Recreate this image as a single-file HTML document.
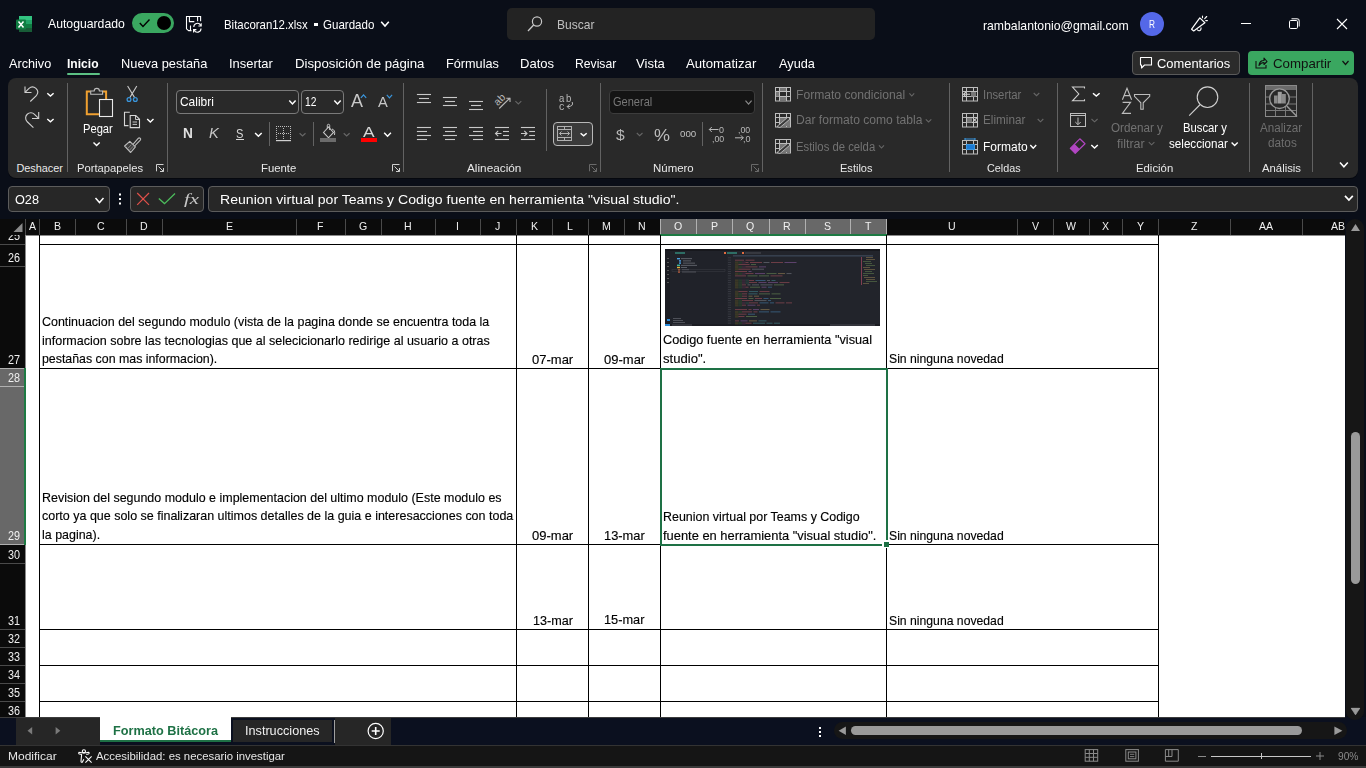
<!DOCTYPE html>
<html><head><meta charset="utf-8"><title>Excel</title>
<style>
html,body{margin:0;padding:0;width:1366px;height:768px;overflow:hidden;background:#0a0e18;}
body>div,body>svg{position:absolute;}
.t{position:absolute;white-space:pre;line-height:normal;transform-origin:0 0;font-family:"Liberation Sans",sans-serif;}
svg{overflow:visible}
</style></head><body>
<svg style="left:16px;top:16px;" width="16" height="16" viewBox="16 16 16 16">
<rect x="19" y="16" width="13" height="16" rx="1" fill="#21a366"/>
<rect x="19" y="16" width="13" height="4" fill="#33c481"/>
<rect x="19" y="24" width="13" height="4" fill="#107c41"/>
<rect x="19" y="28" width="13" height="4" fill="#185c37"/>
<rect x="16" y="19.5" width="10" height="10" rx="1" fill="#107c41"/>
<path d="M18.5 21.5 L23.5 27.5 M23.5 21.5 L18.5 27.5" stroke="#fff" stroke-width="1.5"/>
</svg>
<div class="t" style="left:48.2px;top:16.33px;font-size:13px;color:#ffffff;font-weight:400;font-family:'Liberation Sans',sans-serif;transform:scaleX(0.9402);">Autoguardado</div>
<div style="left:132px;top:13px;width:42px;height:20px;background:#3aa760;border-radius:10px;"></div>
<svg style="left:132px;top:13px;" width="42" height="20" viewBox="132 13 42 20">
<polyline points="139.8,23 143,26.5 149.5,19.5" fill="none" stroke="#000" stroke-width="1.4"/>
<circle cx="164" cy="23" r="7" fill="#000"/>
</svg>
<svg style="left:185px;top:15px;" width="19" height="18" viewBox="185 15 19 18">
<path d="M191.5 30.6 H188.6 L186.5 28.8 V16.5 H200.6 V21.3" fill="none" stroke="#fff" stroke-width="1.1"/>
<path d="M189.4 16.5 V21.6 H194.3 M197.6 16.5 V21.3" fill="none" stroke="#fff" stroke-width="1.1"/>
<path d="M190.5 25.5 V30.5" fill="none" stroke="#fff" stroke-width="1.1"/>
<path d="M193.8 27 A3.6 3.6 0 0 1 200.6 25.3 M201.2 23.2 V26 H198.4" fill="none" stroke="#fff" stroke-width="1.1"/>
<path d="M201 28.6 A3.6 3.6 0 0 1 194.2 30.3 M193.6 32.4 V29.6 H196.4" fill="none" stroke="#fff" stroke-width="1.1"/>
</svg>
<div class="t" style="left:223.7px;top:17.23px;font-size:13px;color:#ffffff;font-weight:400;font-family:'Liberation Sans',sans-serif;transform:scaleX(0.8785);">Bitacoran12.xlsx</div>
<div style="left:314px;top:22.5px;width:3.5px;height:3.5px;background:#fff;"></div>
<div class="t" style="left:323.4px;top:17.23px;font-size:13px;color:#ffffff;font-weight:400;font-family:'Liberation Sans',sans-serif;transform:scaleX(0.8888);">Guardado</div>
<svg style="left:380px;top:19px;" width="10" height="10" viewBox="380 19 10 10"><polyline points="381.2,21.8 385.0,26 388.8,21.8" fill="none" stroke="#fff" stroke-width="1.6"/></svg>
<div style="left:507px;top:8px;width:368px;height:32px;background:#232323;border-radius:5px;"></div>
<svg style="left:527px;top:15px;" width="17" height="17" viewBox="527 15 17 17"><circle cx="537" cy="21.5" r="4.6" fill="none" stroke="#c8c8c8" stroke-width="1.2"/><line x1="533.6" y1="25" x2="528" y2="31" stroke="#c8c8c8" stroke-width="1.3"/></svg>
<div class="t" style="left:556.6px;top:17.43px;font-size:13px;color:#c0c0c0;font-weight:400;font-family:'Liberation Sans',sans-serif;transform:scaleX(0.9242);">Buscar</div>
<div class="t" style="left:983.2px;top:17.53px;font-size:13px;color:#ffffff;font-weight:400;font-family:'Liberation Sans',sans-serif;transform:scaleX(0.9404);">rambalantonio@gmail.com</div>
<svg style="left:1140px;top:12px;" width="24" height="24" viewBox="1140 12 24 24"><circle cx="1152" cy="24" r="12" fill="#5468e8"/></svg>
<div class="t" style="left:1149.2px;top:18.29px;font-size:10.5px;color:#fff;font-weight:400;font-family:'Liberation Sans',sans-serif;transform:scaleX(0.7901);">R</div>
<svg style="left:1188px;top:14px;" width="22" height="20" viewBox="1188 14 22 20">
<path d="M1191.6 29.2 L1199.8 17.9 L1204.9 22.8 L1193.7 31 Z" fill="none" stroke="#fff" stroke-width="1.2" stroke-linejoin="round"/>
<path d="M1197.2 29.6 A1.9 1.9 0 0 0 1200.8 27.6" fill="none" stroke="#fff" stroke-width="1.1"/>
<path d="M1202.5 16 V17.7 M1204.7 18.6 L1206.7 16.5 M1205.7 20.6 H1207.4" stroke="#fff" stroke-width="1.1" stroke-linecap="round"/>
</svg>
<div style="left:1241px;top:23px;width:10px;height:1px;background:#fff;"></div>
<svg style="left:1288px;top:18px;" width="13" height="13" viewBox="1288 18 13 13"><rect x="1289.5" y="20.5" width="8" height="8" rx="1.2" fill="none" stroke="#fff" stroke-width="1"/><path d="M1291.5 18.8 H1297 A2 2 0 0 1 1299.2 21 V26.5" fill="none" stroke="#fff" stroke-width="1"/></svg>
<svg style="left:1336px;top:18px;" width="13" height="13" viewBox="1336 18 13 13"><path d="M1337 19 L1347 29 M1347 19 L1337 29" stroke="#fff" stroke-width="1.1"/></svg>
<div class="t" style="left:9.2px;top:56.13px;font-size:13px;color:#ffffff;font-weight:400;font-family:'Liberation Sans',sans-serif;transform:scaleX(0.9733);">Archivo</div>
<div class="t" style="left:120.5px;top:56.13px;font-size:13px;color:#ffffff;font-weight:400;font-family:'Liberation Sans',sans-serif;transform:scaleX(0.9868);">Nueva pestaña</div>
<div class="t" style="left:229.2px;top:56.13px;font-size:13px;color:#ffffff;font-weight:400;font-family:'Liberation Sans',sans-serif;transform:scaleX(0.9937);">Insertar</div>
<div class="t" style="left:295.4px;top:56.13px;font-size:13px;color:#ffffff;font-weight:400;font-family:'Liberation Sans',sans-serif;transform:scaleX(1.0173);">Disposición de página</div>
<div class="t" style="left:446.1px;top:56.13px;font-size:13px;color:#ffffff;font-weight:400;font-family:'Liberation Sans',sans-serif;transform:scaleX(0.9762);">Fórmulas</div>
<div class="t" style="left:520.2px;top:56.13px;font-size:13px;color:#ffffff;font-weight:400;font-family:'Liberation Sans',sans-serif;transform:scaleX(1.0039);">Datos</div>
<div class="t" style="left:574.5px;top:56.13px;font-size:13px;color:#ffffff;font-weight:400;font-family:'Liberation Sans',sans-serif;transform:scaleX(0.9370);">Revisar</div>
<div class="t" style="left:635.7px;top:56.13px;font-size:13px;color:#ffffff;font-weight:400;font-family:'Liberation Sans',sans-serif;transform:scaleX(1.0080);">Vista</div>
<div class="t" style="left:686.0px;top:56.13px;font-size:13px;color:#ffffff;font-weight:400;font-family:'Liberation Sans',sans-serif;transform:scaleX(1.0133);">Automatizar</div>
<div class="t" style="left:778.9px;top:56.13px;font-size:13px;color:#ffffff;font-weight:400;font-family:'Liberation Sans',sans-serif;transform:scaleX(0.9798);">Ayuda</div>
<div class="t" style="left:67.3px;top:56.13px;font-size:13px;color:#ffffff;font-weight:700;font-family:'Liberation Sans',sans-serif;transform:scaleX(0.9277);">Inicio</div>
<div style="left:67px;top:73px;width:33px;height:2.2px;background:#5cc184;border-radius:1px;"></div>
<div style="left:1132px;top:51px;width:108px;height:24px;background:#2b2b2b;border:1px solid #5a5a5a;box-sizing:border-box;border-radius:4px;"></div>
<svg style="left:1139px;top:56px;" width="15" height="14" viewBox="1139 56 15 14"><path d="M1140.5 57.5 H1151.5 V65 H1144.5 L1141.5 68 V65 H1140.5 Z" fill="none" stroke="#fff" stroke-width="1.1" stroke-linejoin="round"/></svg>
<div class="t" style="left:1156.6px;top:56.23px;font-size:13px;color:#ffffff;font-weight:400;font-family:'Liberation Sans',sans-serif;transform:scaleX(0.9932);">Comentarios</div>
<div style="left:1248px;top:51px;width:106px;height:24px;background:#3aa760;border-radius:4px;"></div>
<svg style="left:1254px;top:56px;" width="14" height="14" viewBox="1254 56 14 14"><path d="M1256 61 V68 H1266 V65" fill="none" stroke="#111" stroke-width="1.1"/><path d="M1259 65.5 Q1259.5 60.5 1264 60.5 V58 L1267 61.5 L1264 64.5 V62.5 Q1261 62.5 1259 65.5 Z" fill="none" stroke="#111" stroke-width="1.1" stroke-linejoin="round"/></svg>
<div class="t" style="left:1272.7px;top:56.23px;font-size:13px;color:#111;font-weight:400;font-family:'Liberation Sans',sans-serif;transform:scaleX(1.0214);">Compartir</div>
<svg style="left:1341px;top:59px;" width="9" height="6" viewBox="1341 59 9 6"><polyline points="1342.5,61 1345.5,64.5 1348.5,61" fill="none" stroke="#111" stroke-width="1.2"/></svg>
<div style="left:8px;top:79px;width:1350px;height:100px;background:#06080e;border-radius:8px;filter:blur(0.6px);"></div>
<div style="left:8px;top:78px;width:1350px;height:100px;background:#292929;border-radius:8px;"></div>
<div style="left:67px;top:83px;width:1px;height:89px;background:#626262;"></div>
<div style="left:167px;top:83px;width:1px;height:89px;background:#626262;"></div>
<div style="left:403px;top:83px;width:1px;height:89px;background:#626262;"></div>
<div style="left:600px;top:83px;width:1px;height:89px;background:#626262;"></div>
<div style="left:762px;top:83px;width:1px;height:89px;background:#626262;"></div>
<div style="left:949px;top:83px;width:1px;height:89px;background:#626262;"></div>
<div style="left:1057px;top:83px;width:1px;height:89px;background:#626262;"></div>
<div style="left:1249px;top:83px;width:1px;height:89px;background:#626262;"></div>
<div style="left:1312px;top:83px;width:1px;height:89px;background:#626262;"></div>
<div class="t" style="left:16.4px;top:161.83px;font-size:10.9px;color:#e8e8e8;font-weight:400;font-family:'Liberation Sans',sans-serif;">Deshacer</div>
<div class="t" style="left:76.5px;top:161.83px;font-size:10.9px;color:#e8e8e8;font-weight:400;font-family:'Liberation Sans',sans-serif;transform:scaleX(1.0314);">Portapapeles</div>
<div class="t" style="left:260.6px;top:161.83px;font-size:10.9px;color:#e8e8e8;font-weight:400;font-family:'Liberation Sans',sans-serif;transform:scaleX(1.0411);">Fuente</div>
<div class="t" style="left:466.8px;top:161.83px;font-size:10.9px;color:#e8e8e8;font-weight:400;font-family:'Liberation Sans',sans-serif;transform:scaleX(1.0823);">Alineación</div>
<div class="t" style="left:653.0px;top:161.83px;font-size:10.9px;color:#e8e8e8;font-weight:400;font-family:'Liberation Sans',sans-serif;transform:scaleX(1.0507);">Número</div>
<div class="t" style="left:840.2px;top:161.83px;font-size:10.9px;color:#e8e8e8;font-weight:400;font-family:'Liberation Sans',sans-serif;transform:scaleX(1.0132);">Estilos</div>
<div class="t" style="left:987.3px;top:161.83px;font-size:10.9px;color:#e8e8e8;font-weight:400;font-family:'Liberation Sans',sans-serif;transform:scaleX(0.9910);">Celdas</div>
<div class="t" style="left:1135.6px;top:161.83px;font-size:10.9px;color:#e8e8e8;font-weight:400;font-family:'Liberation Sans',sans-serif;transform:scaleX(1.0410);">Edición</div>
<div class="t" style="left:1261.7px;top:161.83px;font-size:10.9px;color:#e8e8e8;font-weight:400;font-family:'Liberation Sans',sans-serif;transform:scaleX(1.0391);">Análisis</div>
<svg style="left:20px;top:82px;" width="50" height="50" viewBox="20 82 50 50">
<path d="M25 86.5 V92.5 H31.5" fill="none" stroke="#d0d0d0" stroke-width="1.1"/>
<path d="M25.3 92.2 L29 88.3 A5.2 5.2 0 0 1 36.6 95.3 L30.3 101.5" fill="none" stroke="#d0d0d0" stroke-width="1.1"/>
<path d="M38.7 112 V118.5 H32" fill="none" stroke="#d0d0d0" stroke-width="1.1"/>
<path d="M38.4 118.2 L34.5 114.3 A5.2 5.2 0 0 0 27 121.5 L33.4 127.6" fill="none" stroke="#d0d0d0" stroke-width="1.1"/>
<polyline points="47.3,93.2 50.45,96 53.6,93.2" fill="none" stroke="#fff" stroke-width="1.4"/><polyline points="47.3,119 50.45,121.8 53.6,119" fill="none" stroke="#fff" stroke-width="1.4"/></svg>
<svg style="left:80px;top:84px;" width="40" height="36" viewBox="80 84 40 36">
<path d="M90.5 91.4 H86.8 V114.2 H99.2" fill="none" stroke="#f0a030" stroke-width="2"/>
<path d="M102.8 91.4 H106.1 V99.2" fill="none" stroke="#f0a030" stroke-width="2"/>
<path d="M90.7 94.3 V91 H94.2 A2.6 2.6 0 0 1 99.4 91 H102.6 V94.3 Z" fill="#292929" stroke="#bdbdbd" stroke-width="1.1"/>
<rect x="99.5" y="99.5" width="13" height="17" fill="#292929" stroke="#e8e8e8" stroke-width="1.1"/>
</svg>
<div class="t" style="left:82.5px;top:121.87px;font-size:12.4px;color:#fff;font-weight:400;font-family:'Liberation Sans',sans-serif;transform:scaleX(0.9009);">Pegar</div>
<svg style="left:92px;top:141px;" width="9" height="7" viewBox="92 141 9 7"><polyline points="93.5,142.6 96.6,145.6 99.7,142.6" fill="none" stroke="#fff" stroke-width="1.4"/></svg>
<svg style="left:124px;top:84px;" width="16" height="20" viewBox="124 84 16 20">
<path d="M127.6 86 L134.6 97.6 M136.8 86 L129.8 97.6" stroke="#c8c8c8" stroke-width="1.1"/>
<circle cx="129" cy="99.5" r="1.9" fill="#292929" stroke="#3a96dd" stroke-width="1.3"/>
<circle cx="135.3" cy="99.5" r="1.9" fill="#292929" stroke="#3a96dd" stroke-width="1.3"/>
</svg>
<svg style="left:123px;top:110px;" width="32" height="20" viewBox="123 110 32 20">
<path d="M129.8 112.3 H124.5 V125.6 H128.5" fill="none" stroke="#d8d8d8" stroke-width="1.1"/>
<path d="M130.2 115.5 H135.8 L139.5 119.2 V127.6 H130.2 Z" fill="none" stroke="#d8d8d8" stroke-width="1.1"/>
<path d="M135.5 115.5 V119.5 H139.5" fill="none" stroke="#d8d8d8" stroke-width="0.9"/>
<path d="M132.6 122 H137 M132.6 124.4 H137" stroke="#d8d8d8" stroke-width="0.9"/>
<polyline points="147.2,119 150.35,122 153.5,119" fill="none" stroke="#fff" stroke-width="1.4"/></svg>
<svg style="left:123px;top:136px;" width="18" height="18" viewBox="123 136 18 18">
<path d="M133 144.3 L138.2 138.4 A1 1 0 0 1 140.3 140.2 L134.7 145.8" fill="none" stroke="#bdbdbd" stroke-width="1.1"/>
<path d="M124.6 146 L129.8 141.3 L135.4 146.9 L130.7 152.5 Z" fill="#3c3c3c" stroke="#bdbdbd" stroke-width="1.1" stroke-linejoin="round"/>
<path d="M127.5 148.8 L131.5 144.6 M129.3 150.4 L133.3 146.2" stroke="#8a8a8a" stroke-width="0.9"/>
</svg>
<svg style="left:154px;top:162px;" width="12" height="12" viewBox="154 162 12 12"><path d="M156.5 171.3 V164.5 H163.5" fill="none" stroke="#d0d0d0" stroke-width="1"/><path d="M158.5 166.5 L163.5 171.5 M160 171.5 H163.5 V168" fill="none" stroke="#d0d0d0" stroke-width="1"/></svg>
<div style="left:176px;top:90px;width:123px;height:24px;background:transparent;border:1px solid #7a7a7a;box-sizing:border-box;border-radius:4px;"></div>
<div class="t" style="left:179.5px;top:94.11px;font-size:12.8px;color:#fff;font-weight:400;font-family:'Liberation Sans',sans-serif;transform:scaleX(0.9316);">Calibri</div>
<svg style="left:288px;top:98px;" width="9" height="8" viewBox="288 98 9 8"><polyline points="289.3,100.6 292.45000000000005,104 295.6,100.6" fill="none" stroke="#fff" stroke-width="1.5"/></svg>
<div style="left:301px;top:90px;width:43px;height:24px;background:transparent;border:1px solid #7a7a7a;box-sizing:border-box;border-radius:4px;"></div>
<div class="t" style="left:305.0px;top:94.41px;font-size:12.8px;color:#fff;font-weight:400;font-family:'Liberation Sans',sans-serif;transform:scaleX(0.8009);">12</div>
<svg style="left:333px;top:98px;" width="9" height="8" viewBox="333 98 9 8"><polyline points="334.3,100.6 337.5,104 340.7,100.6" fill="none" stroke="#fff" stroke-width="1.5"/></svg>
<div class="t" style="left:350.5px;top:91.16px;font-size:17.5px;color:#c8c8c8;font-weight:400;font-family:'Liberation Sans',sans-serif;transform:scaleX(1.0267);">A</div>
<svg style="left:359px;top:93px;" width="9" height="6" viewBox="359 93 9 6"><polyline points="360.9,97.8 363.54999999999995,94.8 366.2,97.8" fill="none" stroke="#3a96dd" stroke-width="1.2"/></svg>
<div class="t" style="left:378.0px;top:94.51px;font-size:13.8px;color:#c8c8c8;font-weight:400;font-family:'Liberation Sans',sans-serif;transform:scaleX(1.0649);">A</div>
<svg style="left:385px;top:93px;" width="9" height="6" viewBox="385 93 9 6"><polyline points="386.8,94.8 389.45000000000005,97.8 392.1,94.8" fill="none" stroke="#3a96dd" stroke-width="1.2"/></svg>
<div class="t" style="left:182.5px;top:125.33px;font-size:14px;color:#e0e0e0;font-weight:700;font-family:'Liberation Sans',sans-serif;transform:scaleX(0.9778);">N</div>
<div class="t" style="left:209.0px;top:125.33px;font-size:14px;color:#c8c8c8;font-weight:400;font-family:'Liberation Sans',sans-serif;font-style:italic;transform:scaleX(1.0488);">K</div>
<div class="t" style="left:235.8px;top:126.23px;font-size:13px;color:#d8d8d8;font-weight:400;font-family:'Liberation Sans',sans-serif;transform:scaleX(0.8533);">S</div>
<div style="left:235.8px;top:139px;width:8.2px;height:1.1px;background:#d8d8d8;"></div>
<svg style="left:254px;top:131px;" width="9" height="7" viewBox="254 131 9 7"><polyline points="255.1,133 258.4,136.3 261.7,133" fill="none" stroke="#fff" stroke-width="1.5"/></svg>
<div style="left:269px;top:122px;width:1px;height:24px;background:#626262;"></div>
<svg style="left:275px;top:125px;" width="17" height="17" viewBox="275 125 17 17"><rect x="276" y="126" width="1" height="1" fill="#bdbdbd"/><rect x="278" y="126" width="1" height="1" fill="#bdbdbd"/><rect x="280" y="126" width="1" height="1" fill="#bdbdbd"/><rect x="282" y="126" width="1" height="1" fill="#bdbdbd"/><rect x="284" y="126" width="1" height="1" fill="#bdbdbd"/><rect x="286" y="126" width="1" height="1" fill="#bdbdbd"/><rect x="288" y="126" width="1" height="1" fill="#bdbdbd"/><rect x="290" y="126" width="1" height="1" fill="#bdbdbd"/><rect x="276" y="128" width="1" height="1" fill="#bdbdbd"/><rect x="290" y="128" width="1" height="1" fill="#bdbdbd"/><rect x="283" y="128" width="1" height="1" fill="#bdbdbd"/><rect x="276" y="130" width="1" height="1" fill="#bdbdbd"/><rect x="290" y="130" width="1" height="1" fill="#bdbdbd"/><rect x="283" y="130" width="1" height="1" fill="#bdbdbd"/><rect x="276" y="132" width="1" height="1" fill="#bdbdbd"/><rect x="290" y="132" width="1" height="1" fill="#bdbdbd"/><rect x="283" y="132" width="1" height="1" fill="#bdbdbd"/><rect x="276" y="134" width="1" height="1" fill="#bdbdbd"/><rect x="290" y="134" width="1" height="1" fill="#bdbdbd"/><rect x="283" y="134" width="1" height="1" fill="#bdbdbd"/><rect x="276" y="136" width="1" height="1" fill="#bdbdbd"/><rect x="290" y="136" width="1" height="1" fill="#bdbdbd"/><rect x="283" y="136" width="1" height="1" fill="#bdbdbd"/><rect x="276" y="138" width="1" height="1" fill="#bdbdbd"/><rect x="290" y="138" width="1" height="1" fill="#bdbdbd"/><rect x="283" y="138" width="1" height="1" fill="#bdbdbd"/><rect x="278" y="133" width="1" height="1" fill="#bdbdbd"/><rect x="280" y="133" width="1" height="1" fill="#bdbdbd"/><rect x="282" y="133" width="1" height="1" fill="#bdbdbd"/><rect x="284" y="133" width="1" height="1" fill="#bdbdbd"/><rect x="286" y="133" width="1" height="1" fill="#bdbdbd"/><rect x="288" y="133" width="1" height="1" fill="#bdbdbd"/><rect x="276" y="140" width="15" height="1.2" fill="#d0d0d0"/></svg>
<svg style="left:298px;top:132px;" width="9" height="6" viewBox="298 132 9 6"><polyline points="299.6,133.2 302.55,136 305.5,133.2" fill="none" stroke="#666" stroke-width="1.2"/></svg>
<div style="left:313px;top:122px;width:1px;height:24px;background:#626262;"></div>
<svg style="left:319px;top:124px;" width="18" height="19" viewBox="319 124 18 19">
<path d="M323.5 132.5 L328.5 127 L333.5 132.5 L328.5 137.8 Z" fill="none" stroke="#c8c8c8" stroke-width="1.1"/>
<path d="M327.3 128.3 V125.5 A1.2 1.2 0 0 1 329.7 125.5 V130" fill="none" stroke="#c8c8c8" stroke-width="1"/>
<path d="M332 129 Q335.5 130 334.5 135" fill="none" stroke="#c8c8c8" stroke-width="1"/>
<rect x="320" y="138" width="16" height="4" fill="#6b6b6b"/>
</svg>
<svg style="left:342px;top:132px;" width="9" height="6" viewBox="342 132 9 6"><polyline points="343.7,133.2 346.65,136 349.6,133.2" fill="none" stroke="#666" stroke-width="1.2"/></svg>
<div class="t" style="left:363.2px;top:124.51px;font-size:13.8px;color:#d8d8d8;font-weight:400;font-family:'Liberation Sans',sans-serif;transform:scaleX(1.2604);">A</div>
<div style="left:361px;top:138px;width:16px;height:4px;background:#ff0000;"></div>
<svg style="left:383px;top:131px;" width="9" height="7" viewBox="383 131 9 7"><polyline points="384.2,132.8 387.54999999999995,136.2 390.9,132.8" fill="none" stroke="#fff" stroke-width="1.5"/></svg>
<svg style="left:390px;top:162px;" width="12" height="12" viewBox="390 162 12 12"><path d="M392.5 171.3 V164.5 H399.5" fill="none" stroke="#d0d0d0" stroke-width="1"/><path d="M394.5 166.5 L399.5 171.5 M396 171.5 H399.5 V168" fill="none" stroke="#d0d0d0" stroke-width="1"/></svg>
<svg style="left:414px;top:90px;" width="125" height="55" viewBox="414 90 125 55"><line x1="416.9" y1="94.5" x2="431" y2="94.5" stroke="#c8c8c8" stroke-width="1.1"/><line x1="419" y1="98.5" x2="429" y2="98.5" stroke="#c8c8c8" stroke-width="1.1"/><line x1="416.9" y1="102.5" x2="431" y2="102.5" stroke="#c8c8c8" stroke-width="1.1"/><line x1="442.9" y1="97.5" x2="457" y2="97.5" stroke="#c8c8c8" stroke-width="1.1"/><line x1="445" y1="101.5" x2="455" y2="101.5" stroke="#c8c8c8" stroke-width="1.1"/><line x1="442.9" y1="105.5" x2="457" y2="105.5" stroke="#c8c8c8" stroke-width="1.1"/><line x1="469" y1="101.5" x2="483" y2="101.5" stroke="#c8c8c8" stroke-width="1.1"/><line x1="471" y1="105.5" x2="481" y2="105.5" stroke="#c8c8c8" stroke-width="1.1"/><line x1="469" y1="109.5" x2="483" y2="109.5" stroke="#c8c8c8" stroke-width="1.1"/><line x1="416.9" y1="127.5" x2="431" y2="127.5" stroke="#c8c8c8" stroke-width="1.1"/><line x1="416.9" y1="131.5" x2="427" y2="131.5" stroke="#c8c8c8" stroke-width="1.1"/><line x1="416.9" y1="135.5" x2="431" y2="135.5" stroke="#c8c8c8" stroke-width="1.1"/><line x1="416.9" y1="139.5" x2="427" y2="139.5" stroke="#c8c8c8" stroke-width="1.1"/><line x1="442.9" y1="127.5" x2="457" y2="127.5" stroke="#c8c8c8" stroke-width="1.1"/><line x1="445" y1="131.5" x2="455" y2="131.5" stroke="#c8c8c8" stroke-width="1.1"/><line x1="442.9" y1="135.5" x2="457" y2="135.5" stroke="#c8c8c8" stroke-width="1.1"/><line x1="445" y1="139.5" x2="455" y2="139.5" stroke="#c8c8c8" stroke-width="1.1"/><line x1="469" y1="127.5" x2="483" y2="127.5" stroke="#c8c8c8" stroke-width="1.1"/><line x1="473" y1="131.5" x2="483" y2="131.5" stroke="#c8c8c8" stroke-width="1.1"/><line x1="469" y1="135.5" x2="483" y2="135.5" stroke="#c8c8c8" stroke-width="1.1"/><line x1="473" y1="139.5" x2="483" y2="139.5" stroke="#c8c8c8" stroke-width="1.1"/><line x1="494.9" y1="127.5" x2="509" y2="127.5" stroke="#c8c8c8" stroke-width="1.1"/><line x1="503" y1="131.5" x2="509" y2="131.5" stroke="#c8c8c8" stroke-width="1.1"/><line x1="503" y1="135.5" x2="509" y2="135.5" stroke="#c8c8c8" stroke-width="1.1"/><line x1="494.9" y1="139.5" x2="509" y2="139.5" stroke="#c8c8c8" stroke-width="1.1"/><line x1="520.9" y1="127.5" x2="535" y2="127.5" stroke="#c8c8c8" stroke-width="1.1"/><line x1="529.2" y1="131.5" x2="535" y2="131.5" stroke="#c8c8c8" stroke-width="1.1"/><line x1="529.2" y1="135.5" x2="535" y2="135.5" stroke="#c8c8c8" stroke-width="1.1"/><line x1="520.9" y1="139.5" x2="535" y2="139.5" stroke="#c8c8c8" stroke-width="1.1"/>
<path d="M501.5 133.5 H495.5 M498.2 130.8 L495.5 133.5 L498.2 136.2" fill="none" stroke="#c8c8c8" stroke-width="1.1"/>
<path d="M521 133.5 H527 M524.3 130.8 L527 133.5 L524.3 136.2" fill="none" stroke="#c8c8c8" stroke-width="1.1"/>
<path d="M499.2 108.5 L510 98 M506.3 98.3 H510 V102" fill="none" stroke="#b8b8b8" stroke-width="1.1"/>
<polyline points="515.4,101.2 518.3499999999999,104 521.3,101.2" fill="none" stroke="#666" stroke-width="1.1"/></svg>
<svg style="left:490px;top:88px;" width="20" height="20" viewBox="490 88 20 20"><text x="499.4" y="103.2" font-family="Liberation Sans" font-size="10.5" fill="#b8b8b8" text-anchor="middle" transform="rotate(-45 499.4 99.5)">ab</text></svg>
<div style="left:546px;top:89px;width:1px;height:62px;background:#626262;"></div>
<div class="t" style="left:559.3px;top:91.99px;font-size:10.5px;color:#b8b8b8;font-weight:400;font-family:'Liberation Sans',sans-serif;transform:scaleX(0.9070);">a</div>
<div class="t" style="left:566.0px;top:91.99px;font-size:10.5px;color:#b8b8b8;font-weight:400;font-family:'Liberation Sans',sans-serif;transform:scaleX(0.9070);">b</div>
<div class="t" style="left:559.3px;top:99.79px;font-size:10.5px;color:#b8b8b8;font-weight:400;font-family:'Liberation Sans',sans-serif;transform:scaleX(1.0095);">c</div>
<svg style="left:565px;top:100px;" width="10" height="11" viewBox="565 100 10 11"><path d="M572.2 102 Q574 106.6 567.2 106.6 M569.6 104.2 L567.2 106.6 L569.6 109" fill="none" stroke="#b8b8b8" stroke-width="1"/></svg>
<div style="left:553px;top:122px;width:40px;height:24px;background:#3a3a3a;border:1px solid #b8b8b8;box-sizing:border-box;border-radius:4px;"></div>
<svg style="left:556px;top:125px;" width="18" height="18" viewBox="556 125 18 18">
<rect x="557.5" y="126.5" width="14" height="14" fill="none" stroke="#b0b0b0" stroke-width="1"/>
<path d="M557.5 129.5 H571.5 M557.5 137.5 H571.5 M564.5 126.5 V129.5 M564.5 137.5 V140.5" fill="none" stroke="#b0b0b0" stroke-width="1"/>
<path d="M559.5 133.5 H569.5 M561.5 131.5 L559.5 133.5 L561.5 135.5 M567.5 131.5 L569.5 133.5 L567.5 135.5" fill="none" stroke="#b0b0b0" stroke-width="1"/>
</svg>
<svg style="left:579px;top:131px;" width="9" height="7" viewBox="579 131 9 7"><polyline points="580.6,133.2 583.6500000000001,135.8 586.7,133.2" fill="none" stroke="#fff" stroke-width="1.5"/></svg>
<svg style="left:587px;top:162px;" width="12" height="12" viewBox="587 162 12 12"><path d="M589.5 171.3 V164.5 H596.5" fill="none" stroke="#6a6a6a" stroke-width="1"/><path d="M591.5 166.5 L596.5 171.5 M593 171.5 H596.5 V168" fill="none" stroke="#6a6a6a" stroke-width="1"/></svg>
<div style="left:609px;top:90px;width:146px;height:24px;background:#141414;border:1px solid #3c3c3c;box-sizing:border-box;border-radius:4px;"></div>
<div class="t" style="left:612.7px;top:94.87px;font-size:12.4px;color:#777;font-weight:400;font-family:'Liberation Sans',sans-serif;transform:scaleX(0.8913);">General</div>
<svg style="left:744px;top:99px;" width="9" height="7" viewBox="744 99 9 7"><polyline points="745.5,100.7 748.55,104.1 751.6,100.7" fill="none" stroke="#8a8a8a" stroke-width="1.2"/></svg>
<div class="t" style="left:615.8px;top:125.97px;font-size:15.5px;color:#b8b8b8;font-weight:400;font-family:'Liberation Sans',sans-serif;transform:scaleX(1.0087);">$</div>
<svg style="left:636px;top:132px;" width="8" height="6" viewBox="636 132 8 6"><polyline points="636.8,133 639.65,135.7 642.5,133" fill="none" stroke="#666" stroke-width="1.1"/></svg>
<div class="t" style="left:654.0px;top:125.61px;font-size:17px;color:#bdbdbd;font-weight:400;font-family:'Liberation Sans',sans-serif;transform:scaleX(1.0579);">%</div>
<div class="t" style="left:679.5px;top:128.85px;font-size:9px;color:#c0c0c0;font-weight:400;font-family:'Liberation Sans',sans-serif;transform:scaleX(1.0844);">000</div>
<div style="left:702px;top:122px;width:1px;height:24px;background:#626262;"></div>
<div class="t" style="left:719.4px;top:124.60px;font-size:8.5px;color:#b8b8b8;font-weight:400;font-family:'Liberation Sans',sans-serif;transform:scaleX(1.0561);">0</div>
<div class="t" style="left:712.3px;top:133.60px;font-size:8.5px;color:#b8b8b8;font-weight:400;font-family:'Liberation Sans',sans-serif;transform:scaleX(1.0399);">,00</div>
<svg style="left:707px;top:125px;" width="14" height="9" viewBox="707 125 14 9"><path d="M718.5 129.5 H709.3 M711.8 127 L709.3 129.5 L711.8 132" fill="none" stroke="#b8b8b8" stroke-width="1"/></svg>
<div class="t" style="left:738.4px;top:124.60px;font-size:8.5px;color:#b8b8b8;font-weight:400;font-family:'Liberation Sans',sans-serif;transform:scaleX(1.0314);">,00</div>
<div class="t" style="left:743.1px;top:133.60px;font-size:8.5px;color:#b8b8b8;font-weight:400;font-family:'Liberation Sans',sans-serif;transform:scaleX(1.0573);">,0</div>
<svg style="left:733px;top:134px;" width="12" height="8" viewBox="733 134 12 8"><path d="M735 137.8 H743.3 M740.8 135.3 L743.3 137.8 L740.8 140.3" fill="none" stroke="#b8b8b8" stroke-width="1"/></svg>
<svg style="left:749px;top:162px;" width="12" height="12" viewBox="749 162 12 12"><path d="M751.5 171.3 V164.5 H758.5" fill="none" stroke="#6a6a6a" stroke-width="1"/><path d="M753.5 166.5 L758.5 171.5 M755 171.5 H758.5 V168" fill="none" stroke="#6a6a6a" stroke-width="1"/></svg>
<svg style="left:774px;top:86px;" width="18" height="16" viewBox="774 86 18 16"><rect x="775.5" y="87.5" width="15" height="13.5" fill="none" stroke="#bdbdbd" stroke-width="1"/>
<path d="M779.5 87 V101 M786.5 87 V101 M775 91.5 H791 M775 96.5 H791" stroke="#bdbdbd" stroke-width="1"/><rect x="780" y="88" width="6" height="3" fill="#777"/><rect x="776" y="92" width="3" height="4.5" fill="#777"/><rect x="780" y="97" width="6" height="3" fill="#777"/></svg>
<div class="t" style="left:795.6px;top:87.66px;font-size:12.3px;color:#727272;font-weight:400;font-family:'Liberation Sans',sans-serif;transform:scaleX(0.9852);">Formato condicional</div>
<svg style="left:908px;top:92px;" width="8" height="6" viewBox="908 92 8 6"><polyline points="909.4,93.3 911.8,96 914.2,93.3" fill="none" stroke="#666" stroke-width="1.1"/></svg>
<svg style="left:774px;top:112px;" width="18" height="16" viewBox="774 112 18 16"><rect x="775.5" y="113.5" width="15" height="13.5" fill="none" stroke="#bdbdbd" stroke-width="1"/>
<path d="M779.5 113 V127 M786.5 113 V127 M775 117.5 H791 M775 122.5 H791" stroke="#bdbdbd" stroke-width="1"/><rect x="780" y="118" width="10" height="8" fill="#777"/><path d="M777 126.5 L788 117 L790 119 L780 127.5 Z" fill="#3a3a3a" stroke="#bdbdbd" stroke-width="0.9"/></svg>
<div class="t" style="left:795.6px;top:113.46px;font-size:12.3px;color:#727272;font-weight:400;font-family:'Liberation Sans',sans-serif;transform:scaleX(0.9837);">Dar formato como tabla</div>
<svg style="left:924px;top:118px;" width="8" height="6" viewBox="924 118 8 6"><polyline points="925.8,119.3 928.55,122 931.3,119.3" fill="none" stroke="#666" stroke-width="1.1"/></svg>
<svg style="left:774px;top:138px;" width="18" height="16" viewBox="774 138 18 16"><rect x="775.5" y="139.5" width="15" height="13.5" fill="none" stroke="#bdbdbd" stroke-width="1"/>
<path d="M779.5 139 V153 M786.5 139 V153 M775 143.5 H791 M775 148.5 H791" stroke="#bdbdbd" stroke-width="1"/><rect x="780" y="144" width="10" height="8" fill="#777"/><path d="M777 152.5 L788 143 L790 145 L780 153.5 Z" fill="#3a3a3a" stroke="#bdbdbd" stroke-width="0.9"/></svg>
<div class="t" style="left:795.6px;top:139.66px;font-size:12.3px;color:#727272;font-weight:400;font-family:'Liberation Sans',sans-serif;transform:scaleX(0.9194);">Estilos de celda</div>
<svg style="left:878px;top:144px;" width="8" height="6" viewBox="878 144 8 6"><polyline points="879,145.3 881.5,148 884,145.3" fill="none" stroke="#666" stroke-width="1.1"/></svg>
<svg style="left:961px;top:86px;" width="18" height="16" viewBox="961 86 18 16"><rect x="962.5" y="87.5" width="15" height="13.5" fill="none" stroke="#bdbdbd" stroke-width="1"/>
<path d="M966.5 87 V101 M973.5 87 V101 M962 91.5 H978 M962 96.5 H978" stroke="#bdbdbd" stroke-width="1"/><rect x="971" y="92" width="5" height="4.5" fill="#777"/><path d="M970 94.3 H963.5 M966 91.8 L963.5 94.3 L966 96.8" fill="none" stroke="#d0d0d0" stroke-width="1.1"/></svg>
<div class="t" style="left:982.6px;top:87.66px;font-size:12.3px;color:#727272;font-weight:400;font-family:'Liberation Sans',sans-serif;transform:scaleX(0.9208);">Insertar</div>
<svg style="left:1032px;top:92px;" width="8" height="6" viewBox="1032 92 8 6"><polyline points="1033.7,93 1036.5,95.7 1039.3,93" fill="none" stroke="#666" stroke-width="1.1"/></svg>
<svg style="left:961px;top:112px;" width="18" height="16" viewBox="961 112 18 16"><rect x="962.5" y="113.5" width="15" height="13.5" fill="none" stroke="#bdbdbd" stroke-width="1"/>
<path d="M966.5 113 V127 M973.5 113 V127 M962 117.5 H978 M962 122.5 H978" stroke="#bdbdbd" stroke-width="1"/><rect x="967" y="118" width="5" height="4.5" fill="#777"/><path d="M972.5 117.5 L977 122.5 M977 117.5 L972.5 122.5" stroke="#d0d0d0" stroke-width="1.1"/></svg>
<div class="t" style="left:982.6px;top:113.46px;font-size:12.3px;color:#727272;font-weight:400;font-family:'Liberation Sans',sans-serif;transform:scaleX(0.9545);">Eliminar</div>
<svg style="left:1036px;top:118px;" width="8" height="6" viewBox="1036 118 8 6"><polyline points="1037.7,119 1040.5,121.8 1043.3,119" fill="none" stroke="#666" stroke-width="1.1"/></svg>
<svg style="left:961px;top:137px;" width="18" height="18" viewBox="961 137 18 18"><path d="M965 139 H975 M965 138 V140 M975 138 V140" stroke="#3a96dd" stroke-width="1.1"/><rect x="962.5" y="140.5" width="15" height="13.5" fill="none" stroke="#bdbdbd" stroke-width="1"/>
<path d="M966.5 140 V154 M973.5 140 V154 M962 144.5 H978 M962 149.5 H978" stroke="#bdbdbd" stroke-width="1"/><rect x="966.5" y="144.5" width="8" height="5" fill="#1a7ad4" stroke="#3a96dd" stroke-width="1"/></svg>
<div class="t" style="left:982.6px;top:140.06px;font-size:12.3px;color:#fff;font-weight:400;font-family:'Liberation Sans',sans-serif;transform:scaleX(0.9760);">Formato</div>
<svg style="left:1029px;top:144px;" width="8" height="6" viewBox="1029 144 8 6"><polyline points="1030.3,145.1 1033.25,148.2 1036.2,145.1" fill="none" stroke="#fff" stroke-width="1.4"/></svg>
<svg style="left:1070px;top:85px;" width="16" height="18" viewBox="1070 85 16 18"><path d="M1084.5 88.5 V87 H1072.5 L1078.8 94 L1072.5 100.8 H1084.5 V99.3" fill="none" stroke="#d0d0d0" stroke-width="1.1"/></svg>
<svg style="left:1092px;top:92px;" width="9" height="6" viewBox="1092 92 9 6"><polyline points="1093,93.2 1096.3,96 1099.6,93.2" fill="none" stroke="#fff" stroke-width="1.5"/></svg>
<svg style="left:1069px;top:112px;" width="18" height="16" viewBox="1069 112 18 16"><rect x="1070.5" y="113.5" width="15" height="13" fill="none" stroke="#bdbdbd" stroke-width="1"/><path d="M1070.5 115.5 H1085.5" stroke="#bdbdbd" stroke-width="1"/><path d="M1078 117.5 V124.5 M1075.3 122 L1078 124.7 L1080.7 122" fill="none" stroke="#bdbdbd" stroke-width="1"/></svg>
<svg style="left:1090px;top:118px;" width="9" height="6" viewBox="1090 118 9 6"><polyline points="1091.5,119 1094.55,121.8 1097.6,119" fill="none" stroke="#666" stroke-width="1.1"/></svg>
<svg style="left:1069px;top:137px;" width="18" height="18" viewBox="1069 137 18 18"><path d="M1079.8 138.8 L1085 143.8 L1075.2 153.4 L1070.3 148.4 Z" fill="none" stroke="#b146c2" stroke-width="1.2" stroke-linejoin="round"/><path d="M1070.3 148.4 L1074.6 144.1 L1079.6 149.1 L1075.2 153.4 Z" fill="#b146c2"/></svg>
<svg style="left:1090px;top:144px;" width="9" height="6" viewBox="1090 144 9 6"><polyline points="1091.3,145 1094.55,148 1097.8,145" fill="none" stroke="#fff" stroke-width="1.5"/></svg>
<svg style="left:1120px;top:86px;" width="14" height="30" viewBox="1120 86 14 30"><path d="M1122.4 99.8 L1127 88.2 L1131.6 99.8 M1124 95.6 H1130" fill="none" stroke="#bdbdbd" stroke-width="1.1"/><path d="M1122.6 102.4 H1130.6 L1122.4 113.4 H1131" fill="none" stroke="#bdbdbd" stroke-width="1.1"/></svg>
<svg style="left:1133px;top:93px;" width="18" height="18" viewBox="1133 93 18 18"><path d="M1134.5 94.5 H1149.7 V96.3 L1143.2 102.8 V109.2 H1140.8 V102.8 L1134.5 96.3 Z" fill="none" stroke="#bdbdbd" stroke-width="1.1"/></svg>
<div class="t" style="left:1110.6px;top:120.56px;font-size:12.3px;color:#727272;font-weight:400;font-family:'Liberation Sans',sans-serif;transform:scaleX(0.9490);">Ordenar y</div>
<div class="t" style="left:1117.4px;top:136.66px;font-size:12.3px;color:#727272;font-weight:400;font-family:'Liberation Sans',sans-serif;transform:scaleX(1.0099);">filtrar</div>
<svg style="left:1147px;top:141px;" width="8" height="6" viewBox="1147 141 8 6"><polyline points="1148.8,142.1 1151.6,144.8 1154.4,142.1" fill="none" stroke="#666" stroke-width="1.1"/></svg>
<svg style="left:1188px;top:86px;" width="32" height="32" viewBox="1188 86 32 32"><circle cx="1207.5" cy="97.2" r="10.3" fill="none" stroke="#d0d0d0" stroke-width="1.1"/><line x1="1200.2" y1="104.5" x2="1189.2" y2="115.7" stroke="#d0d0d0" stroke-width="1.1"/></svg>
<div class="t" style="left:1182.5px;top:120.56px;font-size:12.3px;color:#fff;font-weight:400;font-family:'Liberation Sans',sans-serif;transform:scaleX(0.9176);">Buscar y</div>
<div class="t" style="left:1169.1px;top:136.66px;font-size:12.3px;color:#fff;font-weight:400;font-family:'Liberation Sans',sans-serif;transform:scaleX(0.9469);">seleccionar</div>
<svg style="left:1230px;top:141px;" width="9" height="6" viewBox="1230 141 9 6"><polyline points="1231.6,142.6 1234.65,145.5 1237.7,142.6" fill="none" stroke="#fff" stroke-width="1.4"/></svg>
<svg style="left:1264px;top:84px;" width="34" height="34" viewBox="1264 84 34 34">
<rect x="1265.5" y="85.5" width="31" height="31" fill="none" stroke="#8a8a8a" stroke-width="1"/>
<rect x="1266" y="86" width="30" height="4" fill="#6a6a6a"/>
<path d="M1266 97 H1296 M1266 104 H1296 M1266 110.5 H1296 M1275.5 90 V116 M1285.5 90 V116" stroke="#7a7a7a" stroke-width="1"/>
<circle cx="1279.5" cy="98.7" r="9.8" fill="#292929" stroke="#9a9a9a" stroke-width="1.4"/>
<rect x="1274" y="95.5" width="3.6" height="8" fill="#8a8a8a"/><rect x="1277.8" y="91.8" width="4" height="11.7" fill="#a0a0a0"/><rect x="1282" y="94" width="3.8" height="9.5" fill="#8a8a8a"/>
<line x1="1286.8" y1="106" x2="1297" y2="116.6" stroke="#9a9a9a" stroke-width="1.4"/>
</svg>
<div class="t" style="left:1260.2px;top:120.66px;font-size:12.3px;color:#6e6e6e;font-weight:400;font-family:'Liberation Sans',sans-serif;transform:scaleX(0.9474);">Analizar</div>
<div class="t" style="left:1267.6px;top:136.26px;font-size:12.3px;color:#6e6e6e;font-weight:400;font-family:'Liberation Sans',sans-serif;transform:scaleX(0.9570);">datos</div>
<svg style="left:1338px;top:160px;" width="12" height="9" viewBox="1338 160 12 9"><polyline points="1340,162.5 1343.9,166.8 1347.8,162.5" fill="none" stroke="#fff" stroke-width="1.5"/></svg>
<div style="left:8px;top:186px;width:102px;height:26px;background:#272727;border:1px solid #5c5c5c;box-sizing:border-box;border-radius:4px;"></div>
<div class="t" style="left:15.3px;top:191.88px;font-size:13.5px;color:#ffffff;font-weight:400;font-family:'Liberation Sans',sans-serif;transform:scaleX(0.9400);">O28</div>
<svg style="left:94px;top:196px;" width="11" height="8" viewBox="94 196 11 8"><polyline points="95.5,198 99.5,202.5 103.5,198" fill="none" stroke="#fff" stroke-width="1.5"/></svg>
<svg style="left:118px;top:192px;" width="4" height="14" viewBox="118 192 4 14"><rect x="119" y="193.5" width="2" height="2" fill="#fff"/><rect x="119" y="198" width="2" height="2" fill="#fff"/><rect x="119" y="202.5" width="2" height="2" fill="#fff"/></svg>
<div style="left:130px;top:186px;width:74px;height:26px;background:#272727;border:1px solid #5c5c5c;box-sizing:border-box;border-radius:4px;"></div>
<svg style="left:136px;top:192px;" width="14" height="14" viewBox="136 192 14 14"><path d="M137.2 193 L149 204.8 M149 193 L137.2 204.8" stroke="#e0504a" stroke-width="1.2"/></svg>
<svg style="left:158px;top:192px;" width="18" height="13" viewBox="158 192 18 13"><polyline points="158.8,198.5 164.5,203.6 175,193.5" fill="none" stroke="#4cbb5c" stroke-width="1.3"/></svg>
<div class="t" style="left:183.6px;top:191.42px;font-size:15px;color:#c8c8c8;font-weight:400;font-family:'Liberation Serif',sans-serif;font-style:italic;transform:scaleX(1.3853);">fx</div>
<div style="left:208px;top:186px;width:1150px;height:26px;background:#272727;border:1px solid #5c5c5c;box-sizing:border-box;border-radius:4px;"></div>
<div class="t" style="left:220.1px;top:191.68px;font-size:13.5px;color:#ffffff;font-weight:400;font-family:'Liberation Sans',sans-serif;transform:scaleX(1.0421);">Reunion virtual por Teams y Codigo fuente en herramienta &quot;visual studio&quot;.</div>
<svg style="left:1343px;top:193px;" width="11" height="9" viewBox="1343 193 11 9"><polyline points="1345,195.8 1348.9,200 1352.8,195.8" fill="none" stroke="#fff" stroke-width="1.7"/></svg>
<div style="left:0px;top:219px;width:1345px;height:16px;background:#0b0b0b;"></div>
<div style="left:660px;top:219px;width:227px;height:16px;background:#686868;"></div>
<div style="left:0px;top:235px;width:25px;height:482px;background:#0b0b0b;"></div>
<div style="left:0px;top:368px;width:25px;height:176px;background:#686868;"></div>
<div style="left:25px;top:235px;width:1320px;height:482px;background:#ffffff;"></div>
<div style="left:25px;top:235px;width:1320px;height:1px;background:#8a8a8a;"></div>
<svg style="left:12px;top:222px;" width="12" height="12" viewBox="12 222 12 12"><path d="M22.5 223 V232 H13.5 Z" fill="#8a8a8a"/></svg>
<div style="left:25px;top:219px;width:1px;height:16px;background:#4a4a4a;"></div>
<div style="left:39px;top:219px;width:1px;height:16px;background:#4a4a4a;"></div>
<div style="left:75px;top:219px;width:1px;height:16px;background:#4a4a4a;"></div>
<div style="left:126px;top:219px;width:1px;height:16px;background:#4a4a4a;"></div>
<div style="left:162px;top:219px;width:1px;height:16px;background:#4a4a4a;"></div>
<div style="left:296px;top:219px;width:1px;height:16px;background:#4a4a4a;"></div>
<div style="left:345px;top:219px;width:1px;height:16px;background:#4a4a4a;"></div>
<div style="left:381px;top:219px;width:1px;height:16px;background:#4a4a4a;"></div>
<div style="left:435px;top:219px;width:1px;height:16px;background:#4a4a4a;"></div>
<div style="left:480px;top:219px;width:1px;height:16px;background:#4a4a4a;"></div>
<div style="left:516px;top:219px;width:1px;height:16px;background:#4a4a4a;"></div>
<div style="left:552px;top:219px;width:1px;height:16px;background:#4a4a4a;"></div>
<div style="left:588px;top:219px;width:1px;height:16px;background:#4a4a4a;"></div>
<div style="left:624px;top:219px;width:1px;height:16px;background:#4a4a4a;"></div>
<div style="left:660px;top:219px;width:1px;height:16px;background:#b0b0b0;"></div>
<div style="left:696px;top:219px;width:1px;height:16px;background:#b0b0b0;"></div>
<div style="left:732px;top:219px;width:1px;height:16px;background:#b0b0b0;"></div>
<div style="left:769px;top:219px;width:1px;height:16px;background:#b0b0b0;"></div>
<div style="left:805px;top:219px;width:1px;height:16px;background:#b0b0b0;"></div>
<div style="left:850px;top:219px;width:1px;height:16px;background:#b0b0b0;"></div>
<div style="left:886px;top:219px;width:1px;height:16px;background:#b0b0b0;"></div>
<div style="left:1017px;top:219px;width:1px;height:16px;background:#4a4a4a;"></div>
<div style="left:1053px;top:219px;width:1px;height:16px;background:#4a4a4a;"></div>
<div style="left:1089px;top:219px;width:1px;height:16px;background:#4a4a4a;"></div>
<div style="left:1122px;top:219px;width:1px;height:16px;background:#4a4a4a;"></div>
<div style="left:1158px;top:219px;width:1px;height:16px;background:#4a4a4a;"></div>
<div style="left:1230px;top:219px;width:1px;height:16px;background:#4a4a4a;"></div>
<div style="left:1302px;top:219px;width:1px;height:16px;background:#4a4a4a;"></div>
<div style="left:0px;top:244px;width:25px;height:1px;background:#4a4a4a;"></div>
<div style="left:0px;top:266px;width:25px;height:1px;background:#4a4a4a;"></div>
<div style="left:0px;top:368px;width:25px;height:1px;background:#b0b0b0;"></div>
<div style="left:0px;top:386px;width:25px;height:1px;background:#b0b0b0;"></div>
<div style="left:0px;top:544px;width:25px;height:1px;background:#b0b0b0;"></div>
<div style="left:0px;top:563px;width:25px;height:1px;background:#4a4a4a;"></div>
<div style="left:0px;top:629px;width:25px;height:1px;background:#4a4a4a;"></div>
<div style="left:0px;top:647px;width:25px;height:1px;background:#4a4a4a;"></div>
<div style="left:0px;top:665px;width:25px;height:1px;background:#4a4a4a;"></div>
<div style="left:0px;top:683px;width:25px;height:1px;background:#4a4a4a;"></div>
<div style="left:0px;top:701px;width:25px;height:1px;background:#4a4a4a;"></div>
<div style="left:25px;top:235px;width:1px;height:482px;background:#8a8a8a;"></div>
<div style="left:660px;top:234px;width:227px;height:2px;background:#1d7a43;"></div>
<div style="left:24px;top:368px;width:2px;height:177px;background:#1d7a43;"></div>
<div style="left:39px;top:244px;width:1120px;height:1px;background:#000;"></div>
<div style="left:39px;top:368px;width:1120px;height:1px;background:#000;"></div>
<div style="left:39px;top:544px;width:1120px;height:1px;background:#000;"></div>
<div style="left:39px;top:629px;width:1120px;height:1px;background:#000;"></div>
<div style="left:39px;top:665px;width:1120px;height:1px;background:#000;"></div>
<div style="left:39px;top:701px;width:1120px;height:1px;background:#000;"></div>
<div style="left:39px;top:235px;width:1px;height:482px;background:#000;"></div>
<div style="left:516px;top:235px;width:1px;height:482px;background:#000;"></div>
<div style="left:588px;top:235px;width:1px;height:482px;background:#000;"></div>
<div style="left:660px;top:235px;width:1px;height:482px;background:#000;"></div>
<div style="left:886px;top:235px;width:1px;height:482px;background:#000;"></div>
<div style="left:1158px;top:235px;width:1px;height:482px;background:#000;"></div>
<div class="t" style="left:28.5px;top:220.29px;font-size:11.5px;color:#f0f0f0;font-weight:400;font-family:'Liberation Sans',sans-serif;transform:scaleX(0.9200);">A</div>
<div class="t" style="left:53.5px;top:220.29px;font-size:11.5px;color:#f0f0f0;font-weight:400;font-family:'Liberation Sans',sans-serif;transform:scaleX(0.9200);">B</div>
<div class="t" style="left:96.7px;top:220.29px;font-size:11.5px;color:#f0f0f0;font-weight:400;font-family:'Liberation Sans',sans-serif;transform:scaleX(0.9200);">C</div>
<div class="t" style="left:140.2px;top:220.29px;font-size:11.5px;color:#f0f0f0;font-weight:400;font-family:'Liberation Sans',sans-serif;transform:scaleX(0.9200);">D</div>
<div class="t" style="left:225.5px;top:220.29px;font-size:11.5px;color:#f0f0f0;font-weight:400;font-family:'Liberation Sans',sans-serif;transform:scaleX(0.9200);">E</div>
<div class="t" style="left:317.3px;top:220.29px;font-size:11.5px;color:#f0f0f0;font-weight:400;font-family:'Liberation Sans',sans-serif;transform:scaleX(0.9200);">F</div>
<div class="t" style="left:358.9px;top:220.29px;font-size:11.5px;color:#f0f0f0;font-weight:400;font-family:'Liberation Sans',sans-serif;transform:scaleX(0.9200);">G</div>
<div class="t" style="left:404.2px;top:220.29px;font-size:11.5px;color:#f0f0f0;font-weight:400;font-family:'Liberation Sans',sans-serif;transform:scaleX(0.9200);">H</div>
<div class="t" style="left:456.0px;top:220.29px;font-size:11.5px;color:#f0f0f0;font-weight:400;font-family:'Liberation Sans',sans-serif;transform:scaleX(0.9200);">I</div>
<div class="t" style="left:495.4px;top:220.29px;font-size:11.5px;color:#f0f0f0;font-weight:400;font-family:'Liberation Sans',sans-serif;transform:scaleX(0.9200);">J</div>
<div class="t" style="left:530.5px;top:220.29px;font-size:11.5px;color:#f0f0f0;font-weight:400;font-family:'Liberation Sans',sans-serif;transform:scaleX(0.9200);">K</div>
<div class="t" style="left:567.1px;top:220.29px;font-size:11.5px;color:#f0f0f0;font-weight:400;font-family:'Liberation Sans',sans-serif;transform:scaleX(0.9200);">L</div>
<div class="t" style="left:601.6px;top:220.29px;font-size:11.5px;color:#f0f0f0;font-weight:400;font-family:'Liberation Sans',sans-serif;transform:scaleX(0.9200);">M</div>
<div class="t" style="left:638.2px;top:220.29px;font-size:11.5px;color:#f0f0f0;font-weight:400;font-family:'Liberation Sans',sans-serif;transform:scaleX(0.9200);">N</div>
<div class="t" style="left:673.9px;top:220.29px;font-size:11.5px;color:#f0f0f0;font-weight:400;font-family:'Liberation Sans',sans-serif;transform:scaleX(0.9200);">O</div>
<div class="t" style="left:710.5px;top:220.29px;font-size:11.5px;color:#f0f0f0;font-weight:400;font-family:'Liberation Sans',sans-serif;transform:scaleX(0.9200);">P</div>
<div class="t" style="left:746.4px;top:220.29px;font-size:11.5px;color:#f0f0f0;font-weight:400;font-family:'Liberation Sans',sans-serif;transform:scaleX(0.9200);">Q</div>
<div class="t" style="left:783.2px;top:220.29px;font-size:11.5px;color:#f0f0f0;font-weight:400;font-family:'Liberation Sans',sans-serif;transform:scaleX(0.9200);">R</div>
<div class="t" style="left:824.0px;top:220.29px;font-size:11.5px;color:#f0f0f0;font-weight:400;font-family:'Liberation Sans',sans-serif;transform:scaleX(0.9200);">S</div>
<div class="t" style="left:864.8px;top:220.29px;font-size:11.5px;color:#f0f0f0;font-weight:400;font-family:'Liberation Sans',sans-serif;transform:scaleX(0.9200);">T</div>
<div class="t" style="left:947.7px;top:220.29px;font-size:11.5px;color:#f0f0f0;font-weight:400;font-family:'Liberation Sans',sans-serif;transform:scaleX(0.9200);">U</div>
<div class="t" style="left:1031.5px;top:220.29px;font-size:11.5px;color:#f0f0f0;font-weight:400;font-family:'Liberation Sans',sans-serif;transform:scaleX(0.9200);">V</div>
<div class="t" style="left:1066.0px;top:220.29px;font-size:11.5px;color:#f0f0f0;font-weight:400;font-family:'Liberation Sans',sans-serif;transform:scaleX(0.9200);">W</div>
<div class="t" style="left:1102.0px;top:220.29px;font-size:11.5px;color:#f0f0f0;font-weight:400;font-family:'Liberation Sans',sans-serif;transform:scaleX(0.9200);">X</div>
<div class="t" style="left:1136.5px;top:220.29px;font-size:11.5px;color:#f0f0f0;font-weight:400;font-family:'Liberation Sans',sans-serif;transform:scaleX(0.9200);">Y</div>
<div class="t" style="left:1190.8px;top:220.29px;font-size:11.5px;color:#f0f0f0;font-weight:400;font-family:'Liberation Sans',sans-serif;transform:scaleX(0.9200);">Z</div>
<div class="t" style="left:1258.9px;top:220.29px;font-size:11.5px;color:#f0f0f0;font-weight:400;font-family:'Liberation Sans',sans-serif;transform:scaleX(0.9200);">AA</div>
<div class="t" style="left:1330.9px;top:220.29px;font-size:11.5px;color:#f0f0f0;font-weight:400;font-family:'Liberation Sans',sans-serif;transform:scaleX(0.9200);">AB</div>
<div class="t" style="left:7.6px;top:229.14px;font-size:12px;color:#f0f0f0;font-weight:400;font-family:'Liberation Sans',sans-serif;transform:scaleX(0.9000);">25</div>
<div class="t" style="left:7.6px;top:251.14px;font-size:12px;color:#f0f0f0;font-weight:400;font-family:'Liberation Sans',sans-serif;transform:scaleX(0.9000);">26</div>
<div class="t" style="left:7.6px;top:353.14px;font-size:12px;color:#f0f0f0;font-weight:400;font-family:'Liberation Sans',sans-serif;transform:scaleX(0.9000);">27</div>
<div class="t" style="left:7.6px;top:371.14px;font-size:12px;color:#f0f0f0;font-weight:400;font-family:'Liberation Sans',sans-serif;transform:scaleX(0.9000);">28</div>
<div class="t" style="left:7.6px;top:529.14px;font-size:12px;color:#f0f0f0;font-weight:400;font-family:'Liberation Sans',sans-serif;transform:scaleX(0.9000);">29</div>
<div class="t" style="left:7.6px;top:548.14px;font-size:12px;color:#f0f0f0;font-weight:400;font-family:'Liberation Sans',sans-serif;transform:scaleX(0.9000);">30</div>
<div class="t" style="left:7.6px;top:614.14px;font-size:12px;color:#f0f0f0;font-weight:400;font-family:'Liberation Sans',sans-serif;transform:scaleX(0.9000);">31</div>
<div class="t" style="left:7.6px;top:632.14px;font-size:12px;color:#f0f0f0;font-weight:400;font-family:'Liberation Sans',sans-serif;transform:scaleX(0.9000);">32</div>
<div class="t" style="left:7.6px;top:650.14px;font-size:12px;color:#f0f0f0;font-weight:400;font-family:'Liberation Sans',sans-serif;transform:scaleX(0.9000);">33</div>
<div class="t" style="left:7.6px;top:668.14px;font-size:12px;color:#f0f0f0;font-weight:400;font-family:'Liberation Sans',sans-serif;transform:scaleX(0.9000);">34</div>
<div class="t" style="left:7.6px;top:686.14px;font-size:12px;color:#f0f0f0;font-weight:400;font-family:'Liberation Sans',sans-serif;transform:scaleX(0.9000);">35</div>
<div class="t" style="left:7.6px;top:704.14px;font-size:12px;color:#f0f0f0;font-weight:400;font-family:'Liberation Sans',sans-serif;transform:scaleX(0.9000);">36</div>
<div class="t" style="left:42.4px;top:314.15px;font-size:13.2px;color:#000;font-weight:400;font-family:'Liberation Sans',sans-serif;transform:scaleX(0.9444);-webkit-text-stroke:0.15px #000;">Continuacion del segundo modulo (vista de la pagina donde se encuentra toda la</div>
<div class="t" style="left:42.4px;top:332.85px;font-size:13.2px;color:#000;font-weight:400;font-family:'Liberation Sans',sans-serif;transform:scaleX(0.9500);-webkit-text-stroke:0.15px #000;">informacion sobre las tecnologias que al selecicionarlo redirige al usuario a otras</div>
<div class="t" style="left:42.4px;top:351.25px;font-size:13.2px;color:#000;font-weight:400;font-family:'Liberation Sans',sans-serif;transform:scaleX(0.9373);-webkit-text-stroke:0.15px #000;">pestañas con mas informacion).</div>
<div class="t" style="left:531.8px;top:351.75px;font-size:13.2px;color:#000;font-weight:400;font-family:'Liberation Sans',sans-serif;transform:scaleX(0.9861);-webkit-text-stroke:0.15px #000;">07-mar</div>
<div class="t" style="left:603.8px;top:351.75px;font-size:13.2px;color:#000;font-weight:400;font-family:'Liberation Sans',sans-serif;transform:scaleX(0.9861);-webkit-text-stroke:0.15px #000;">09-mar</div>
<div class="t" style="left:663.0px;top:332.35px;font-size:13.2px;color:#000;font-weight:400;font-family:'Liberation Sans',sans-serif;transform:scaleX(0.9651);-webkit-text-stroke:0.15px #000;">Codigo fuente en herramienta &quot;visual</div>
<div class="t" style="left:663.0px;top:351.35px;font-size:13.2px;color:#000;font-weight:400;font-family:'Liberation Sans',sans-serif;transform:scaleX(0.9920);-webkit-text-stroke:0.15px #000;">studio&quot;.</div>
<div class="t" style="left:889.1px;top:351.45px;font-size:13.2px;color:#000;font-weight:400;font-family:'Liberation Sans',sans-serif;transform:scaleX(0.9255);-webkit-text-stroke:0.15px #000;">Sin ninguna novedad</div>
<div class="t" style="left:42.4px;top:489.55px;font-size:13.2px;color:#000;font-weight:400;font-family:'Liberation Sans',sans-serif;transform:scaleX(0.9456);-webkit-text-stroke:0.15px #000;">Revision del segundo modulo e implementacion del ultimo modulo (Este modulo es</div>
<div class="t" style="left:42.4px;top:508.25px;font-size:13.2px;color:#000;font-weight:400;font-family:'Liberation Sans',sans-serif;transform:scaleX(0.9468);-webkit-text-stroke:0.15px #000;">corto ya que solo se finalizaran ultimos detalles de la guia e interesacciones con toda</div>
<div class="t" style="left:42.4px;top:527.35px;font-size:13.2px;color:#000;font-weight:400;font-family:'Liberation Sans',sans-serif;transform:scaleX(0.9433);-webkit-text-stroke:0.15px #000;">la pagina).</div>
<div class="t" style="left:531.8px;top:527.65px;font-size:13.2px;color:#000;font-weight:400;font-family:'Liberation Sans',sans-serif;transform:scaleX(0.9861);-webkit-text-stroke:0.15px #000;">09-mar</div>
<div class="t" style="left:604.2px;top:527.65px;font-size:13.2px;color:#000;font-weight:400;font-family:'Liberation Sans',sans-serif;transform:scaleX(0.9765);-webkit-text-stroke:0.15px #000;">13-mar</div>
<div class="t" style="left:663.4px;top:508.75px;font-size:13.2px;color:#000;font-weight:400;font-family:'Liberation Sans',sans-serif;transform:scaleX(0.9426);-webkit-text-stroke:0.15px #000;">Reunion virtual por Teams y Codigo</div>
<div class="t" style="left:663.4px;top:527.55px;font-size:13.2px;color:#000;font-weight:400;font-family:'Liberation Sans',sans-serif;transform:scaleX(0.9776);-webkit-text-stroke:0.15px #000;">fuente en herramienta &quot;visual studio&quot;.</div>
<div class="t" style="left:889.1px;top:527.55px;font-size:13.2px;color:#000;font-weight:400;font-family:'Liberation Sans',sans-serif;transform:scaleX(0.9255);-webkit-text-stroke:0.15px #000;">Sin ninguna novedad</div>
<div class="t" style="left:533.0px;top:612.55px;font-size:13.2px;color:#000;font-weight:400;font-family:'Liberation Sans',sans-serif;transform:scaleX(0.9574);-webkit-text-stroke:0.15px #000;">13-mar</div>
<div class="t" style="left:604.2px;top:612.45px;font-size:13.2px;color:#000;font-weight:400;font-family:'Liberation Sans',sans-serif;transform:scaleX(0.9693);-webkit-text-stroke:0.15px #000;">15-mar</div>
<div class="t" style="left:889.1px;top:612.65px;font-size:13.2px;color:#000;font-weight:400;font-family:'Liberation Sans',sans-serif;transform:scaleX(0.9255);-webkit-text-stroke:0.15px #000;">Sin ninguna novedad</div>
<div style="left:0px;top:219px;width:25px;height:16px;background:#0b0b0b;"></div>
<svg style="left:12px;top:222px;" width="12" height="12" viewBox="12 222 12 12"><path d="M22.5 223 V232 H13.5 Z" fill="#8a8a8a"/></svg>
<div style="left:25px;top:219px;width:1px;height:16px;background:#4a4a4a;"></div>
<svg style="left:665px;top:249px;" width="215" height="77" viewBox="665 249 215 77"><rect x="665" y="249" width="215" height="77" fill="#22242b"/><rect x="665" y="249" width="215" height="2" fill="#17181d"/><rect x="665" y="251" width="5" height="73" fill="#1b1c22"/><rect x="670" y="251" width="57" height="73" fill="#202229"/><rect x="665" y="324" width="215" height="2" fill="#1b1c22"/><rect x="665" y="324" width="5" height="2" fill="#2a8ad8"/><rect x="675" y="252.5" width="10" height="1" fill="#3bb7a0"/><rect x="677" y="258.0" width="3" height="1.4" fill="#4aa0e0"/><rect x="681" y="258.3" width="11" height="0.8" fill="#6a6d75"/><rect x="679" y="260.2" width="2" height="1.4" fill="#4aa0e0"/><rect x="683" y="260.5" width="8" height="0.8" fill="#6a6d75"/><rect x="679" y="262.4" width="2" height="1.4" fill="#4aa0e0"/><rect x="683" y="262.7" width="12" height="0.8" fill="#6a6d75"/><rect x="677" y="264.6" width="3" height="1.4" fill="#3bb7a0"/><rect x="681" y="264.90000000000003" width="16" height="0.8" fill="#6a6d75"/><rect x="677" y="266.8" width="3" height="1.4" fill="#e5b33a"/><rect x="681" y="267.1" width="6" height="0.8" fill="#6a6d75"/><rect x="678" y="269.0" width="2" height="1.4" fill="#e06c40"/><rect x="682" y="269.3" width="7" height="0.8" fill="#6a6d75"/><rect x="678" y="271.2" width="2" height="1.4" fill="#e06c40"/><rect x="682" y="271.5" width="14" height="0.8" fill="#6a6d75"/><rect x="672" y="269.5" width="53" height="2" fill="none" stroke="#3a3d45" stroke-width="0.5"/><rect x="667" y="258" width="2" height="1" fill="#555"/><rect x="667" y="262" width="2" height="1" fill="#555"/><rect x="667" y="266" width="2" height="1" fill="#555"/><rect x="667" y="270" width="2" height="1" fill="#555"/><rect x="667" y="274" width="2" height="1" fill="#555"/><rect x="667" y="278" width="2" height="1" fill="#555"/><rect x="667" y="282" width="2" height="1" fill="#555"/><rect x="667" y="319" width="3" height="2" fill="#2a8ad8"/><rect x="673" y="318" width="8" height="0.8" fill="#5a5d65"/><rect x="673" y="320" width="10" height="0.8" fill="#5a5d65"/><rect x="673" y="322" width="12" height="0.8" fill="#5a5d65"/><rect x="724" y="252" width="2" height="2" fill="#e06c40"/><rect x="727" y="252.5" width="10" height="1" fill="#3bb7a0"/><rect x="742" y="252" width="2" height="2" fill="#e06c40"/><rect x="745" y="252.5" width="16" height="1" fill="#4a4d55"/><rect x="733" y="255.5" width="140" height="0.8" fill="#4a5a70"/><rect x="728" y="257.5" width="3" height="0.7" fill="#3e4148"/><rect x="728" y="259.75" width="3" height="0.7" fill="#3e4148"/><rect x="735.0" y="259.75" width="9" height="0.8" fill="#c25a66" opacity="0.6"/><rect x="745.5" y="259.75" width="9" height="0.8" fill="#c25a66" opacity="0.6"/><rect x="728" y="262.0" width="3" height="0.7" fill="#3e4148"/><rect x="735.0" y="261.4" width="3.5" height="2.3" fill="#3a3826"/><rect x="738.5" y="261.4" width="3.5" height="2.3" fill="#27392c"/><rect x="742.0" y="261.4" width="3.5" height="2.3" fill="#382838"/><rect x="745.5" y="262.0" width="3" height="0.8" fill="#c25a66" opacity="0.6"/><rect x="750.0" y="262.0" width="12" height="0.8" fill="#c25a66" opacity="0.6"/><rect x="763.5" y="262.0" width="6" height="0.8" fill="#8a8f98" opacity="0.6"/><rect x="771.0" y="262.0" width="12" height="0.8" fill="#c25a66" opacity="0.6"/><rect x="784.5" y="262.0" width="12" height="0.8" fill="#a064b4" opacity="0.6"/><rect x="728" y="264.25" width="3" height="0.7" fill="#3e4148"/><rect x="735.0" y="263.65" width="3.5" height="2.3" fill="#3a3826"/><rect x="738.5" y="264.25" width="11" height="0.8" fill="#c25a66" opacity="0.6"/><rect x="751.0" y="264.25" width="5" height="0.8" fill="#7ba35e" opacity="0.6"/><rect x="728" y="266.5" width="3" height="0.7" fill="#3e4148"/><rect x="735.0" y="265.9" width="3.5" height="2.3" fill="#3a3826"/><rect x="738.5" y="265.9" width="3.5" height="2.3" fill="#27392c"/><rect x="742.0" y="265.9" width="3.5" height="2.3" fill="#382838"/><rect x="745.5" y="266.5" width="12" height="0.8" fill="#c25a66" opacity="0.6"/><rect x="759.0" y="266.5" width="7" height="0.8" fill="#a064b4" opacity="0.6"/><rect x="728" y="268.75" width="3" height="0.7" fill="#3e4148"/><rect x="735.0" y="268.15" width="3.5" height="2.3" fill="#3a3826"/><rect x="738.5" y="268.75" width="12" height="0.8" fill="#c25a66" opacity="0.6"/><rect x="752.0" y="268.75" width="12" height="0.8" fill="#8a8f98" opacity="0.6"/><rect x="728" y="271.0" width="3" height="0.7" fill="#3e4148"/><rect x="735.0" y="271.0" width="12" height="0.8" fill="#c25a66" opacity="0.6"/><rect x="748.5" y="271.0" width="3" height="0.8" fill="#a064b4" opacity="0.6"/><rect x="728" y="273.25" width="3" height="0.7" fill="#3e4148"/><rect x="735.0" y="272.65" width="3.5" height="2.3" fill="#3a3826"/><rect x="738.5" y="272.65" width="3.5" height="2.3" fill="#27392c"/><rect x="742.0" y="272.65" width="3.5" height="2.3" fill="#382838"/><rect x="745.5" y="273.25" width="8" height="0.8" fill="#c25a66" opacity="0.6"/><rect x="755.0" y="273.25" width="10" height="0.8" fill="#a064b4" opacity="0.6"/><rect x="766.5" y="273.25" width="10" height="0.8" fill="#7ba35e" opacity="0.6"/><rect x="778.0" y="273.25" width="7" height="0.8" fill="#b89a5e" opacity="0.6"/><rect x="786.5" y="273.25" width="5" height="0.8" fill="#8a8f98" opacity="0.6"/><rect x="728" y="275.5" width="3" height="0.7" fill="#3e4148"/><rect x="735.0" y="275.5" width="11" height="0.8" fill="#c25a66" opacity="0.6"/><rect x="747.5" y="275.5" width="10" height="0.8" fill="#7ba35e" opacity="0.6"/><rect x="759.0" y="275.5" width="10" height="0.8" fill="#7ba35e" opacity="0.6"/><rect x="770.5" y="275.5" width="12" height="0.8" fill="#c25a66" opacity="0.6"/><rect x="728" y="277.75" width="3" height="0.7" fill="#3e4148"/><rect x="728" y="280.0" width="3" height="0.7" fill="#3e4148"/><rect x="735.0" y="279.4" width="3.5" height="2.3" fill="#3a3826"/><rect x="738.5" y="279.4" width="3.5" height="2.3" fill="#27392c"/><rect x="742.0" y="279.4" width="3.5" height="2.3" fill="#382838"/><rect x="745.5" y="279.4" width="3.5" height="2.3" fill="#263838"/><rect x="749.0" y="280.0" width="5" height="0.8" fill="#c25a66" opacity="0.6"/><rect x="755.5" y="280.0" width="10" height="0.8" fill="#4f8fc4" opacity="0.6"/><rect x="767.0" y="280.0" width="3" height="0.8" fill="#8a8f98" opacity="0.6"/><rect x="771.5" y="280.0" width="4" height="0.8" fill="#4a9aa4" opacity="0.6"/><rect x="728" y="282.25" width="3" height="0.7" fill="#3e4148"/><rect x="735.0" y="281.65" width="3.5" height="2.3" fill="#3a3826"/><rect x="738.5" y="281.65" width="3.5" height="2.3" fill="#27392c"/><rect x="742.0" y="281.65" width="3.5" height="2.3" fill="#382838"/><rect x="745.5" y="281.65" width="3.5" height="2.3" fill="#263838"/><rect x="749.0" y="282.25" width="8" height="0.8" fill="#c25a66" opacity="0.6"/><rect x="758.5" y="282.25" width="8" height="0.8" fill="#a064b4" opacity="0.6"/><rect x="768.0" y="282.25" width="10" height="0.8" fill="#a064b4" opacity="0.6"/><rect x="779.5" y="282.25" width="10" height="0.8" fill="#c25a66" opacity="0.6"/><rect x="728" y="284.5" width="3" height="0.7" fill="#3e4148"/><rect x="735.0" y="283.9" width="3.5" height="2.3" fill="#3a3826"/><rect x="738.5" y="283.9" width="3.5" height="2.3" fill="#27392c"/><rect x="742.0" y="284.5" width="4" height="0.8" fill="#c25a66" opacity="0.6"/><rect x="747.5" y="284.5" width="3" height="0.8" fill="#8a8f98" opacity="0.6"/><rect x="752.0" y="284.5" width="7" height="0.8" fill="#8a8f98" opacity="0.6"/><rect x="760.5" y="284.5" width="12" height="0.8" fill="#8a8f98" opacity="0.6"/><rect x="774.0" y="284.5" width="10" height="0.8" fill="#7ba35e" opacity="0.6"/><rect x="728" y="286.75" width="3" height="0.7" fill="#3e4148"/><rect x="735.0" y="286.15" width="3.5" height="2.3" fill="#3a3826"/><rect x="738.5" y="286.15" width="3.5" height="2.3" fill="#27392c"/><rect x="742.0" y="286.15" width="3.5" height="2.3" fill="#382838"/><rect x="745.5" y="286.75" width="3" height="0.8" fill="#c25a66" opacity="0.6"/><rect x="750.0" y="286.75" width="10" height="0.8" fill="#7ba35e" opacity="0.6"/><rect x="761.5" y="286.75" width="5" height="0.8" fill="#a064b4" opacity="0.6"/><rect x="768.0" y="286.75" width="4" height="0.8" fill="#4f8fc4" opacity="0.6"/><rect x="728" y="289.0" width="3" height="0.7" fill="#3e4148"/><rect x="728" y="291.25" width="3" height="0.7" fill="#3e4148"/><rect x="735.0" y="290.65" width="3.5" height="2.3" fill="#3a3826"/><rect x="738.5" y="291.25" width="9" height="0.8" fill="#c25a66" opacity="0.6"/><rect x="749.0" y="291.25" width="9" height="0.8" fill="#4a9aa4" opacity="0.6"/><rect x="759.5" y="291.25" width="10" height="0.8" fill="#c25a66" opacity="0.6"/><rect x="728" y="293.5" width="3" height="0.7" fill="#3e4148"/><rect x="735.0" y="292.9" width="3.5" height="2.3" fill="#3a3826"/><rect x="738.5" y="292.9" width="3.5" height="2.3" fill="#27392c"/><rect x="742.0" y="293.5" width="5" height="0.8" fill="#c25a66" opacity="0.6"/><rect x="748.5" y="293.5" width="9" height="0.8" fill="#4a9aa4" opacity="0.6"/><rect x="759.0" y="293.5" width="11" height="0.8" fill="#7ba35e" opacity="0.6"/><rect x="771.5" y="293.5" width="9" height="0.8" fill="#7ba35e" opacity="0.6"/><rect x="728" y="295.75" width="3" height="0.7" fill="#3e4148"/><rect x="735.0" y="295.15" width="3.5" height="2.3" fill="#3a3826"/><rect x="738.5" y="295.15" width="3.5" height="2.3" fill="#27392c"/><rect x="742.0" y="295.75" width="5" height="0.8" fill="#c25a66" opacity="0.6"/><rect x="748.5" y="295.75" width="4" height="0.8" fill="#b89a5e" opacity="0.6"/><rect x="754.0" y="295.75" width="5" height="0.8" fill="#b89a5e" opacity="0.6"/><rect x="728" y="298.0" width="3" height="0.7" fill="#3e4148"/><rect x="735.0" y="298.0" width="12" height="0.8" fill="#c25a66" opacity="0.6"/><rect x="748.5" y="298.0" width="5" height="0.8" fill="#7ba35e" opacity="0.6"/><rect x="755.0" y="298.0" width="7" height="0.8" fill="#c25a66" opacity="0.6"/><rect x="763.5" y="298.0" width="5" height="0.8" fill="#4f8fc4" opacity="0.6"/><rect x="770.0" y="298.0" width="11" height="0.8" fill="#7ba35e" opacity="0.6"/><rect x="728" y="300.25" width="3" height="0.7" fill="#3e4148"/><rect x="735.0" y="299.65" width="3.5" height="2.3" fill="#3a3826"/><rect x="738.5" y="299.65" width="3.5" height="2.3" fill="#27392c"/><rect x="742.0" y="300.25" width="11" height="0.8" fill="#c25a66" opacity="0.6"/><rect x="754.5" y="300.25" width="12" height="0.8" fill="#8a8f98" opacity="0.6"/><rect x="768.0" y="300.25" width="3" height="0.8" fill="#4f8fc4" opacity="0.6"/><rect x="728" y="302.5" width="3" height="0.7" fill="#3e4148"/><rect x="735.0" y="301.9" width="3.5" height="2.3" fill="#3a3826"/><rect x="738.5" y="301.9" width="3.5" height="2.3" fill="#27392c"/><rect x="742.0" y="301.9" width="3.5" height="2.3" fill="#382838"/><rect x="745.5" y="301.9" width="3.5" height="2.3" fill="#263838"/><rect x="749.0" y="302.5" width="9" height="0.8" fill="#c25a66" opacity="0.6"/><rect x="759.5" y="302.5" width="9" height="0.8" fill="#4f8fc4" opacity="0.6"/><rect x="770.0" y="302.5" width="4" height="0.8" fill="#4f8fc4" opacity="0.6"/><rect x="775.5" y="302.5" width="9" height="0.8" fill="#c25a66" opacity="0.6"/><rect x="786.0" y="302.5" width="6" height="0.8" fill="#c25a66" opacity="0.6"/><rect x="728" y="304.75" width="3" height="0.7" fill="#3e4148"/><rect x="735.0" y="304.15" width="3.5" height="2.3" fill="#3a3826"/><rect x="738.5" y="304.15" width="3.5" height="2.3" fill="#27392c"/><rect x="742.0" y="304.75" width="4" height="0.8" fill="#c25a66" opacity="0.6"/><rect x="747.5" y="304.75" width="8" height="0.8" fill="#a064b4" opacity="0.6"/><rect x="757.0" y="304.75" width="3" height="0.8" fill="#c25a66" opacity="0.6"/><rect x="728" y="307.0" width="3" height="0.7" fill="#3e4148"/><rect x="728" y="309.25" width="3" height="0.7" fill="#3e4148"/><rect x="735.0" y="309.25" width="12" height="0.8" fill="#c25a66" opacity="0.6"/><rect x="748.5" y="309.25" width="3" height="0.8" fill="#c25a66" opacity="0.6"/><rect x="753.0" y="309.25" width="6" height="0.8" fill="#a064b4" opacity="0.6"/><rect x="760.5" y="309.25" width="9" height="0.8" fill="#b89a5e" opacity="0.6"/><rect x="728" y="311.5" width="3" height="0.7" fill="#3e4148"/><rect x="735.0" y="310.9" width="3.5" height="2.3" fill="#3a3826"/><rect x="738.5" y="310.9" width="3.5" height="2.3" fill="#27392c"/><rect x="742.0" y="311.5" width="10" height="0.8" fill="#c25a66" opacity="0.6"/><rect x="753.5" y="311.5" width="4" height="0.8" fill="#c25a66" opacity="0.6"/><rect x="759.0" y="311.5" width="10" height="0.8" fill="#4f8fc4" opacity="0.6"/><rect x="770.5" y="311.5" width="10" height="0.8" fill="#4f8fc4" opacity="0.6"/><rect x="728" y="313.75" width="3" height="0.7" fill="#3e4148"/><rect x="735.0" y="313.15" width="3.5" height="2.3" fill="#3a3826"/><rect x="738.5" y="313.75" width="8" height="0.8" fill="#c25a66" opacity="0.6"/><rect x="748.0" y="313.75" width="7" height="0.8" fill="#4f8fc4" opacity="0.6"/><rect x="728" y="316.0" width="3" height="0.7" fill="#3e4148"/><rect x="735.0" y="315.4" width="3.5" height="2.3" fill="#3a3826"/><rect x="738.5" y="316.0" width="6" height="0.8" fill="#c25a66" opacity="0.6"/><rect x="746.0" y="316.0" width="11" height="0.8" fill="#7ba35e" opacity="0.6"/><rect x="728" y="318.25" width="3" height="0.7" fill="#3e4148"/><rect x="728" y="320.5" width="3" height="0.7" fill="#3e4148"/><rect x="735.0" y="320.5" width="4" height="0.8" fill="#c25a66" opacity="0.6"/><rect x="740.5" y="320.5" width="7" height="0.8" fill="#a064b4" opacity="0.6"/><rect x="749.0" y="320.5" width="8" height="0.8" fill="#b89a5e" opacity="0.6"/><rect x="758.5" y="320.5" width="8" height="0.8" fill="#4a9aa4" opacity="0.6"/><rect x="728" y="322.75" width="3" height="0.7" fill="#3e4148"/><rect x="735.0" y="322.15" width="3.5" height="2.3" fill="#3a3826"/><rect x="738.5" y="322.15" width="3.5" height="2.3" fill="#27392c"/><rect x="742.0" y="322.15" width="3.5" height="2.3" fill="#382838"/><rect x="745.5" y="322.75" width="6" height="0.8" fill="#c25a66" opacity="0.6"/><rect x="753.0" y="322.75" width="12" height="0.8" fill="#4a9aa4" opacity="0.6"/><rect x="766.5" y="322.75" width="6" height="0.8" fill="#4a9aa4" opacity="0.6"/><rect x="774.0" y="322.75" width="6" height="0.8" fill="#4a9aa4" opacity="0.6"/><rect x="866" y="257" width="7" height="0.8" fill="#b89a5e" opacity="0.5"/><rect x="866" y="259" width="9" height="0.8" fill="#b89a5e" opacity="0.5"/><rect x="863" y="261" width="8" height="0.8" fill="#7ba35e" opacity="0.5"/><rect x="865" y="263" width="7" height="0.8" fill="#7ba35e" opacity="0.5"/><rect x="866" y="265" width="9" height="0.8" fill="#7ba35e" opacity="0.5"/><rect x="863" y="267" width="7" height="0.8" fill="#b89a5e" opacity="0.5"/><rect x="864" y="269" width="11" height="0.8" fill="#b89a5e" opacity="0.5"/><rect x="865" y="271" width="7" height="0.8" fill="#7ba35e" opacity="0.5"/><rect x="863" y="273" width="11" height="0.8" fill="#7ba35e" opacity="0.5"/><rect x="863" y="275" width="5" height="0.8" fill="#7ba35e" opacity="0.5"/><rect x="864" y="277" width="11" height="0.8" fill="#b89a5e" opacity="0.5"/><rect x="866" y="279" width="9" height="0.8" fill="#b89a5e" opacity="0.5"/><rect x="866" y="281" width="11" height="0.8" fill="#7ba35e" opacity="0.5"/><rect x="863" y="283" width="6" height="0.8" fill="#b89a5e" opacity="0.5"/><rect x="861" y="257" width="1" height="28" fill="#c0506a" opacity="0.6"/><rect x="830" y="324.6" width="45" height="0.8" fill="#5a5d65"/><rect x="672" y="324.6" width="20" height="0.8" fill="#5a5d65"/></svg>
<div style="left:660px;top:368px;width:228px;height:2px;background:#1e7145;"></div>
<div style="left:660px;top:368px;width:2px;height:178px;background:#1e7145;"></div>
<div style="left:886px;top:368px;width:2px;height:173px;background:#1e7145;"></div>
<div style="left:660px;top:544px;width:223px;height:2px;background:#1e7145;"></div>
<div style="left:882px;top:540px;width:6px;height:8px;background:#fff;"></div>
<div style="left:884px;top:542px;width:5px;height:5px;background:#1e7145;"></div>
<div style="left:1345px;top:219px;width:21px;height:498px;background:#0a0e18;"></div>
<div style="left:1346px;top:219px;width:18px;height:501px;background:#161616;border-radius:9px;"></div>
<svg style="left:1350px;top:222px;" width="12" height="10" viewBox="1350 222 12 10"><path d="M1351 231 L1355.5 224 L1360 231 Z" fill="#9a9a9a"/></svg>
<svg style="left:1350px;top:706px;" width="12" height="10" viewBox="1350 706 12 10"><path d="M1351 708 L1355.5 715 L1360 708 Z" fill="#9a9a9a"/></svg>
<div style="left:1351px;top:432px;width:9px;height:152px;background:#9a9a9a;border-radius:4.5px;"></div>
<div style="left:0px;top:717px;width:1366px;height:28px;background:#0b101f;"></div>
<div style="left:0px;top:717px;width:1345px;height:1px;background:#3c3c3c;"></div>
<div style="left:1346px;top:710px;width:18px;height:10px;background:#161616;border-radius:0 0 9px 9px;"></div>
<svg style="left:1350px;top:706px;" width="12" height="10" viewBox="1350 706 12 10"><path d="M1351.3 708.3 L1355.5 714.8 L1359.7 708.3 Z" fill="#9a9a9a" stroke="#9a9a9a" stroke-width="0.8" stroke-linejoin="round"/></svg>
<div style="left:16px;top:718px;width:84px;height:27px;background:#262626;"></div>
<svg style="left:26px;top:726px;" width="36" height="10" viewBox="26 726 36 10"><path d="M32.2 727 L27.5 730.7 L32.2 734.4 Z" fill="#7a7a7a"/><path d="M55.6 727 L60.3 730.7 L55.6 734.4 Z" fill="#7a7a7a"/></svg>
<div style="left:100px;top:717px;width:131px;height:23px;background:#ffffff;"></div>
<div style="left:100px;top:740px;width:131px;height:2px;background:#1e7145;"></div>
<div class="t" style="left:112.7px;top:722.71px;font-size:12.8px;color:#1e7145;font-weight:700;font-family:'Liberation Sans',sans-serif;transform:scaleX(0.9919);">Formato Bitácora</div>
<div style="left:233px;top:720px;width:99px;height:22px;background:#262626;"></div>
<div class="t" style="left:245.4px;top:723.41px;font-size:12.8px;color:#f0f0f0;font-weight:400;font-family:'Liberation Sans',sans-serif;transform:scaleX(0.9893);">Instrucciones</div>
<div style="left:334px;top:720px;width:1px;height:23px;background:#a0a0a0;"></div>
<div style="left:335px;top:718px;width:56px;height:27px;background:#262626;"></div>
<svg style="left:366px;top:722px;" width="20" height="20" viewBox="366 722 20 20"><circle cx="375.7" cy="731" r="7.6" fill="none" stroke="#fff" stroke-width="1.2"/><path d="M375.7 727 V735 M371.7 731 H379.7" stroke="#fff" stroke-width="1.6"/></svg>
<svg style="left:818px;top:726px;" width="4" height="12" viewBox="818 726 4 12"><rect x="819" y="727" width="2" height="2" fill="#fff"/><rect x="819" y="731" width="2" height="2" fill="#fff"/><rect x="819" y="735" width="2" height="2" fill="#fff"/></svg>
<div style="left:834px;top:722px;width:513px;height:17px;background:#161616;border-radius:8.5px;"></div>
<svg style="left:837px;top:725px;" width="10" height="11" viewBox="837 725 10 11"><path d="M845.9 726.5 L838.6 730.7 L845.9 734.9 Z" fill="#9a9a9a"/></svg>
<div style="left:851px;top:726px;width:451px;height:9px;background:#9a9a9a;border-radius:4.5px;"></div>
<svg style="left:1333px;top:725px;" width="10" height="11" viewBox="1333 725 10 11"><path d="M1334.4 726.5 L1342.4 730.7 L1334.4 734.9 Z" fill="#9a9a9a"/></svg>
<div style="left:0px;top:745px;width:1366px;height:23px;background:#151515;"></div>
<div style="left:0px;top:745px;width:1366px;height:1px;background:#333333;"></div>
<div style="left:0px;top:766px;width:1366px;height:2px;background:#3a3a3a;"></div>
<div class="t" style="left:8.3px;top:749.22px;font-size:11.8px;color:#e6e6e6;font-weight:400;font-family:'Liberation Sans',sans-serif;transform:scaleX(1.0176);">Modificar</div>
<div class="t" style="left:95.9px;top:749.22px;font-size:11.8px;color:#e6e6e6;font-weight:400;font-family:'Liberation Sans',sans-serif;transform:scaleX(0.9635);">Accesibilidad: es necesario investigar</div>
<svg style="left:76px;top:747px;" width="18" height="18" viewBox="76 747 18 18">
<circle cx="83.9" cy="751.3" r="1.6" fill="none" stroke="#fff" stroke-width="1.1"/>
<path d="M79.2 752.2 Q78 753.6 79.6 754.1 L81.6 754.6 L81 761.4 Q81.2 762.6 82.3 762.2 L83.8 759.2 M79.2 752.2 Q83.9 753.6 88.6 752.2 Q89.9 753.4 88.3 754.1 L86.3 754.6" fill="none" stroke="#fff" stroke-width="1.05" stroke-linejoin="round"/>
<path d="M85.4 756.4 L91.6 762.6 M91.6 756.4 L85.4 762.6" stroke="#fff" stroke-width="1.05"/>
</svg>
<svg style="left:1084px;top:748px;" width="96" height="16" viewBox="1084 748 96 16">
<rect x="1085.2" y="749.6" width="12.5" height="11.6" fill="none" stroke="#8a8a8a" stroke-width="1"/>
<path d="M1089.3 749.6 V761.2 M1093.5 749.6 V761.2 M1085.2 753.5 H1097.7 M1085.2 757.3 H1097.7" stroke="#8a8a8a" stroke-width="1"/>
<rect x="1125.8" y="749.6" width="12.6" height="11.6" fill="none" stroke="#8a8a8a" stroke-width="1"/>
<rect x="1128.3" y="752" width="7.6" height="6.8" fill="none" stroke="#8a8a8a" stroke-width="1"/>
<path d="M1130 754.3 H1134.3 M1130 756.6 H1134.3" stroke="#8a8a8a" stroke-width="0.9"/>
<path d="M1165.4 749.6 H1178.3 V761.2 H1165.4 Z M1165.4 756.5 H1172 V749.6 M1168.7 749.6 V756.5" fill="none" stroke="#8a8a8a" stroke-width="1"/>
</svg>
<div style="left:1198px;top:755.5px;width:8px;height:1px;background:#8a8a8a;"></div>
<div style="left:1211px;top:755.6px;width:100px;height:1.1px;background:#c8c8c8;"></div>
<div style="left:1260.8px;top:753.3px;width:1.1px;height:6px;background:#c8c8c8;"></div>
<svg style="left:1315px;top:751px;" width="10" height="10" viewBox="1315 751 10 10"><path d="M1316 756 H1324 M1320 752 V760" stroke="#8a8a8a" stroke-width="1"/></svg>
<div class="t" style="left:1337.6px;top:749.40px;font-size:11.6px;color:#8a8a8a;font-weight:400;font-family:'Liberation Sans',sans-serif;transform:scaleX(0.8786);">90%</div>
</body></html>
